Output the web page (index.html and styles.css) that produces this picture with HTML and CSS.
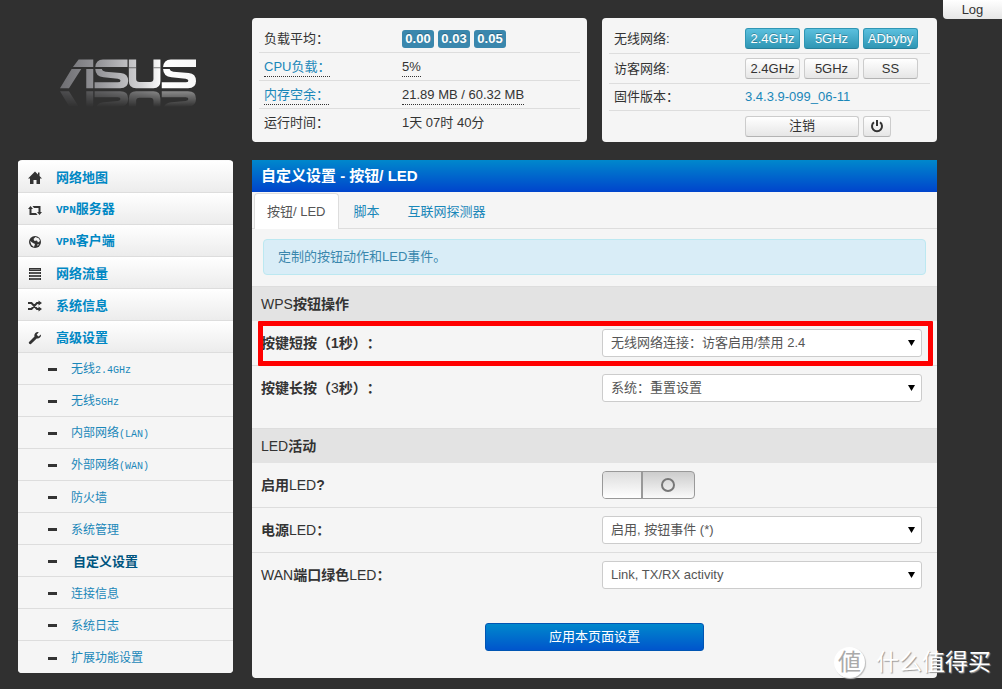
FILE: index.html
```html
<!DOCTYPE html>
<html lang="zh-CN">
<head>
<meta charset="utf-8">
<title>自定义设置 - 按钮/ LED</title>
<link rel="stylesheet" href="styles.css">
</head>
<body>
<svg class="defs" width="0" height="0" aria-hidden="true">
  <defs>
    <linearGradient id="metal" gradientUnits="userSpaceOnUse" x1="180" y1="0" x2="590" y2="0">
      <stop offset="0" stop-color="#6e6e72"/><stop offset="0.3" stop-color="#98989c"/>
      <stop offset="0.6" stop-color="#d4d4d6"/><stop offset="0.75" stop-color="#fff"/><stop offset="1" stop-color="#f8f8f8"/>
    </linearGradient>
    <linearGradient id="fade" x1="0" y1="0" x2="0" y2="1">
      <stop offset="0" stop-color="#fff" stop-opacity="0.45"/><stop offset="1" stop-color="#fff" stop-opacity="0"/>
    </linearGradient>
    <mask id="reflect" maskUnits="userSpaceOnUse" x="170" y="272" width="430" height="48">
      <rect x="170" y="272" width="430" height="48" fill="url(#fade)"/>
    </mask>
    <g id="logo">
      <path d="M179 264L214 206H243L206 264ZM218 200L235 177H279V200ZM258 206H279V264H258Z"/>
      <path d="M285 200Q287 177 308 177H382V200Z"/>
      <path d="M285 206H305Q306 213 316 214L362 218Q384 220 384 242Q384 264 360 264H283V246H353Q361 246 361 241Q361 236 353 235L310 231Q286 229 285 206Z"/>
      <path d="M386 177H408V236Q408 245 418 245H450Q460 245 460 236V177H481V242Q481 264 460 264H408Q386 264 386 242Z"/>
      <path d="M489 200Q491 177 512 177H588V200Z"/>
      <path d="M489 206H509Q510 213 520 214L566 218Q588 220 588 242Q588 264 564 264H485V246H557Q565 246 565 241Q565 236 557 235L514 231Q490 229 489 206Z"/>
      <path d="M386 201H408V204H386ZM460 201H481V204H460Z" fill="#303030" opacity="0.6"/>
    </g>
  </defs>
</svg>

<button class="log" type="button">Log</button>

<div class="page">
  <div class="brand">
    <svg viewBox="170 170 430 150" width="143" height="50" role="img" aria-label="ASUS">
      <use href="#logo" fill="url(#metal)"/>
      <g mask="url(#reflect)"><use href="#logo" fill="url(#metal)" transform="translate(0 537) scale(1 -1)"/></g>
    </svg>
  </div>

  <div class="cards">
    <section class="card">
      <div class="stat"><span class="stat-name">负载平均：</span><span class="group"><span class="badge">0.00</span><span class="badge">0.03</span><span class="badge">0.05</span></span></div>
      <div class="stat"><span class="stat-name"><a class="dotted" href="#">CPU负载：</a></span><span><span class="dotted">5%</span></span></div>
      <div class="stat"><span class="stat-name"><a class="dotted" href="#">内存空余：</a></span><span><span class="dotted">21.89 MB / 60.32 MB</span></span></div>
      <div class="stat"><span class="stat-name">运行时间：</span><span>1天 07时 40分</span></div>
    </section>
    <section class="card wifi">
      <div class="stat tall"><span class="stat-name">无线网络:</span><span class="group"><button class="btn info" type="button">2.4GHz</button><button class="btn info" type="button">5GHz</button><button class="btn info" type="button">ADbyby</button></span></div>
      <div class="stat tall"><span class="stat-name">访客网络:</span><span class="group"><button class="btn" type="button">2.4GHz</button><button class="btn" type="button">5GHz</button><button class="btn" type="button">SS</button></span></div>
      <div class="stat"><span class="stat-name">固件版本：</span><a href="#">3.4.3.9-099_06-11</a></div>
      <div class="stat tall"><span class="stat-name"></span><span class="group"><button class="btn wide" type="button">注销</button><button class="btn power" type="button" aria-label="电源"><svg viewBox="0 0 14 14" width="14" height="14"><path d="M4 3.200A5 5 0 1 0 10 3.200M7 1V7" fill="none" stroke="#333" stroke-width="2"/></svg></button></span></div>
    </section>
  </div>

  <nav class="side">
    <a class="item" href="#"><svg viewBox="0 0 14 14" width="14" height="14"><path d="M7 .5L0 7.500H2V13H5.500V9H8.500V13H12V7.500H14L11.500 5V1.500H10V3.500Z"/></svg>网络地图</a>
    <a class="item" href="#"><svg viewBox="0 0 14 14" width="14" height="14"><path d="M2.500 3L5 6H3.500V10H8L9.500 12H1.500V6H0ZM4.500 3H12.500V9H14L11.500 12L9 9H10.500V5H6Z"/></svg><span><span class="latin">VPN</span>服务器</span></a>
    <a class="item" href="#"><svg viewBox="0 0 14 14" width="14" height="14"><circle cx="7" cy="7" r="6"/><path d="M7.500 2L11 3.500L12 6L10 7.500L9 5.500L6.500 6L5.500 4ZM2 6L5 8L7 9L6 12L3.500 10ZM9.500 9L11 9.500L9.500 11Z" fill="#f6f6f6"/></svg><span><span class="latin">VPN</span>客户端</span></a>
    <a class="item" href="#"><svg viewBox="0 0 14 14" width="14" height="14"><path d="M1 1H13V4H1ZM1 5H13V7H1ZM1 8H13V10H1ZM1 11H13V13H1Z"/><path d="M2 2.500H12M2 6H12M2 9H12M2 12H12" stroke="#aaa" stroke-width=".6"/></svg>网络流量</a>
    <a class="item" href="#"><svg viewBox="0 0 14 14" width="14" height="14"><path d="M0 4H3.500L9 10H11M0 10H3.500L9 4H11" fill="none" stroke="#333" stroke-width="2"/><path d="M10.500 1.500L14 4L10.500 6.500ZM10.500 7.500L14 10L10.500 12.500Z"/></svg>系统信息</a>
    <a class="item" href="#"><svg viewBox="0 0 14 14" width="14" height="14"><path d="M13 3.500L10.500 5.500L8.700 3.700L10.800 1A3.600 3.600 0 0 0 6.500 5.500L1 11A1.500 1.500 0 0 0 3 13L8.700 7.500A3.600 3.600 0 0 0 13 3.500Z"/></svg>高级设置</a>
    <a class="item sub" href="#"><span>无线<span class="latin">2.4GHz</span></span></a>
    <a class="item sub" href="#"><span>无线<span class="latin">5GHz</span></span></a>
    <a class="item sub" href="#"><span>内部网络<span class="latin">(LAN)</span></span></a>
    <a class="item sub" href="#"><span>外部网络<span class="latin">(WAN)</span></span></a>
    <a class="item sub" href="#">防火墙</a>
    <a class="item sub" href="#">系统管理</a>
    <a class="item sub current" href="#">自定义设置</a>
    <a class="item sub" href="#">连接信息</a>
    <a class="item sub" href="#">系统日志</a>
    <a class="item sub" href="#">扩展功能设置</a>
  </nav>

  <main class="panel">
    <h1>自定义设置 - 按钮/ LED</h1>
    <div class="tabs">
      <a class="tab active" href="#">按钮/ LED</a>
      <a class="tab" href="#">脚本</a>
      <a class="tab" href="#">互联网探测器</a>
    </div>
    <p class="alert">定制的按钮动作和LED事件。</p>

    <form>
      <h2><span class="latin">WPS</span>按钮操作</h2>
      <div class="row marked">
        <label for="short">按键短按（1秒）：</label>
        <span class="pick"><select id="short"><option>无线网络连接：访客启用/禁用 2.4</option></select></span>
      </div>
      <div class="row last">
        <label for="long">按键长按（<span class="latin">3</span>秒）：</label>
        <span class="pick"><select id="long"><option>系统：重置设置</option></select></span>
      </div>

      <h2><span class="latin">LED</span>活动</h2>
      <div class="row">
        <label for="led">启用<span class="latin">LED</span>?</label>
        <input class="switch" id="led" type="checkbox">
      </div>
      <div class="row">
        <label for="powerled">电源<span class="latin">LED</span>：</label>
        <span class="pick"><select id="powerled"><option>启用, 按钮事件 (*)</option></select></span>
      </div>
      <div class="row last">
        <label for="wanled"><span class="latin">WAN</span>端口绿色<span class="latin">LED</span>：</label>
        <span class="pick"><select id="wanled"><option>Link, TX/RX activity</option></select></span>
      </div>
      <div class="actions"><button class="apply" type="submit">应用本页面设置</button></div>
    </form>
  </main>
</div>

<div class="watermark"><span class="seal">値</span><span>什么值得买</span></div>
</body>
</html>
```

FILE: styles.css
```css
* { box-sizing: border-box; }

body {
  margin: 0;
  min-height: 100vh;
  position: relative;
  background: #303030;
  color: #333;
  font: 13px/20px "Liberation Sans", "Noto Sans CJK SC", sans-serif;
  text-spacing-trim: space-all;
}

a { color: #1a87b9; text-decoration: none; }
button, select { font: inherit; color: inherit; }
.defs { position: absolute; }

.page {
  display: grid;
  grid-template-columns: 215px minmax(0, 1fr);
  gap: 18px 19px;
  align-items: start;
  padding: 18px 65px 11px 18px;
}

.log {
  position: absolute;
  top: 0;
  right: 0;
  width: 59px;
  height: 19px;
  padding: 0;
  border: 0;
  border-radius: 0 0 0 4px;
  background: linear-gradient(#fff, #e6e6e6);
  line-height: 18px;
}

.brand { padding: 39px 0 0 39px; }
.brand svg { display: block; }

/* Status cards */
.cards { display: grid; grid-template-columns: 1fr 1fr; gap: 15px; }
.card { min-height: 124px; padding: 7px 7px 0; border-radius: 4px; background: #f5f5f5; }
.wifi { padding-top: 6px; }
.stat {
  display: grid;
  grid-template-columns: 138px minmax(0, 1fr);
  align-items: center;
  min-height: 28px;
  padding-left: 5px;
  border-bottom: 1px solid #ddd;
}
.wifi .stat { grid-template-columns: 131px minmax(0, 1fr); min-height: 27px; }
.wifi .tall { min-height: 30px; }
.stat:last-child { border-bottom: 0; }
.stat-name { white-space: nowrap; }
.group { display: flex; gap: 4px; }
.dotted { display: inline-block; line-height: 18px; border-bottom: 1px dotted #333; }
.badge {
  width: 32px;
  border-radius: 3px;
  background: #3a87ad;
  color: #fff;
  font-weight: bold;
  line-height: 18px;
  text-align: center;
  text-shadow: 0 -1px 0 rgba(0, 0, 0, .25);
}
.btn {
  display: flex;
  align-items: center;
  justify-content: center;
  width: 55px;
  height: 21px;
  padding: 0;
  border: 1px solid #ccc;
  border-bottom-color: #b3b3b3;
  border-radius: 3px;
  background: linear-gradient(#fff, #e6e6e6);
  line-height: 18px;
}
.info {
  border-color: #2f96b4;
  border-bottom-color: #28809a;
  background: linear-gradient(#5bc0de, #2f96b4);
  color: #fff;
  text-shadow: 0 -1px 0 rgba(0, 0, 0, .25);
}
.wide { width: 114px; }
.power { width: 28px; }

/* Side menu */
.side { overflow: hidden; padding-top: 1px; border-radius: 4px; background: #fafafa; }
.item {
  display: flex;
  align-items: center;
  gap: 14px;
  height: 32px;
  padding: 2px 0 0 10px;
  border-bottom: 1px solid #ddd;
  background: linear-gradient(#fff, #ececec);
  color: #0088c4;
  font-weight: bold;
}
.item svg { fill: #333; }
.item .latin { font: bold 11px/20px "Liberation Mono", monospace; }
.sub {
  padding-left: 30px;
  background: #f5f5f5;
  color: #1a87b9;
  font-size: 12px;
  font-weight: normal;
}
.sub::before { content: ""; width: 9px; height: 3px; background: #333; }
.sub .latin { font-weight: normal; font-size: 10px; }
.current { gap: 16px; color: #005580; font-size: 13px; font-weight: bold; }
.item:last-child { border-bottom: 0; }

/* Settings panel */
.panel { border-radius: 0 0 4px 4px; background: #f5f5f5; }
h1 {
  margin: 0;
  padding-left: 9px;
  background: linear-gradient(#0088cc, #0044cc);
  color: #fff;
  font-size: 15px;
  line-height: 32px;
}
.tabs {
  display: flex;
  gap: 2px;
  padding: 1px 2px 0;
  border-bottom: 1px solid #ddd;
}
.tab {
  margin-bottom: -1px;
  padding: 7px 12px 6px;
  border: 1px solid transparent;
  border-bottom: 0;
  border-radius: 4px 4px 0 0;
  line-height: 22px;
}
.active { border-color: #ddd; background: #fff; color: #555; }
.alert {
  margin: 10px 11px 11px;
  padding: 7px 14px;
  border: 1px solid #bce8f1;
  border-radius: 4px;
  background: #d9edf7;
  color: #3a87ad;
}
h2 {
  margin: 0;
  padding-left: 9px;
  border-top: 1px solid #ddd;
  background: #e3e3e3;
  font-size: 14px;
  line-height: 34px;
}
h2 .latin, .row .latin { font-weight: normal; }
.row {
  position: relative;
  display: grid;
  grid-template-columns: 341px minmax(0, 1fr);
  align-items: center;
  min-height: 45px;
  padding: 0 15px 0 9px;
  border-bottom: 1px solid #ddd;
}
.last { border-bottom-color: transparent; }
.row label { font-size: 14px; font-weight: bold; }
.marked::after {
  content: "";
  position: absolute;
  inset: 0 4px -1px 6px;
  border: 5px solid #f00;
  border-radius: 1px;
  pointer-events: none;
}
.pick { position: relative; }
.pick::after {
  content: "";
  position: absolute;
  top: 11px;
  right: 7px;
  width: 7px;
  height: 6px;
  background: #000;
  clip-path: polygon(0 0, 100% 0, 50% 100%);
  pointer-events: none;
}
select {
  display: block;
  width: 100%;
  height: 28px;
  padding: 0 20px 0 8px;
  border: 1px solid #ccc;
  border-radius: 3px;
  background: #fff;
  color: #555;
  appearance: none;
}
.row + h2 { margin-top: 17px; }

.switch {
  display: flex;
  align-items: center;
  width: 93px;
  height: 28px;
  margin: 0;
  overflow: hidden;
  border: 1px solid #999;
  border-radius: 4px;
  background: linear-gradient(#ccc, #fafafa);
  appearance: none;
}
.switch::before {
  content: "";
  box-sizing: border-box;
  width: 40px;
  height: 26px;
  border-right: 2px solid #999;
  background: linear-gradient(#ddd, #fff);
}
.switch::after {
  content: "";
  box-sizing: border-box;
  width: 14px;
  height: 14px;
  margin-left: 18px;
  border: 2px solid #777;
  border-radius: 50%;
}

.actions { display: flex; justify-content: center; padding: 25px 0 27px; }
.apply {
  width: 219px;
  height: 28px;
  padding: 0;
  border: 1px solid #0055b3;
  border-radius: 3px;
  background: linear-gradient(#0088cc, #0055cc);
  color: #fff;
}

.watermark {
  position: absolute;
  right: 11px;
  bottom: 11px;
  display: flex;
  align-items: center;
  gap: 11px;
  color: #fff;
  font-size: 23px;
  line-height: 32px;
  text-shadow: 1px 1px 1px #999;
}
.seal {
  width: 31px;
  height: 31px;
  border-radius: 50%;
  background: #fff;
  box-shadow: 1px 1px 1px #bbb;
  color: #aaa;
  line-height: 30px;
  text-align: center;
  text-shadow: none;
}
```
